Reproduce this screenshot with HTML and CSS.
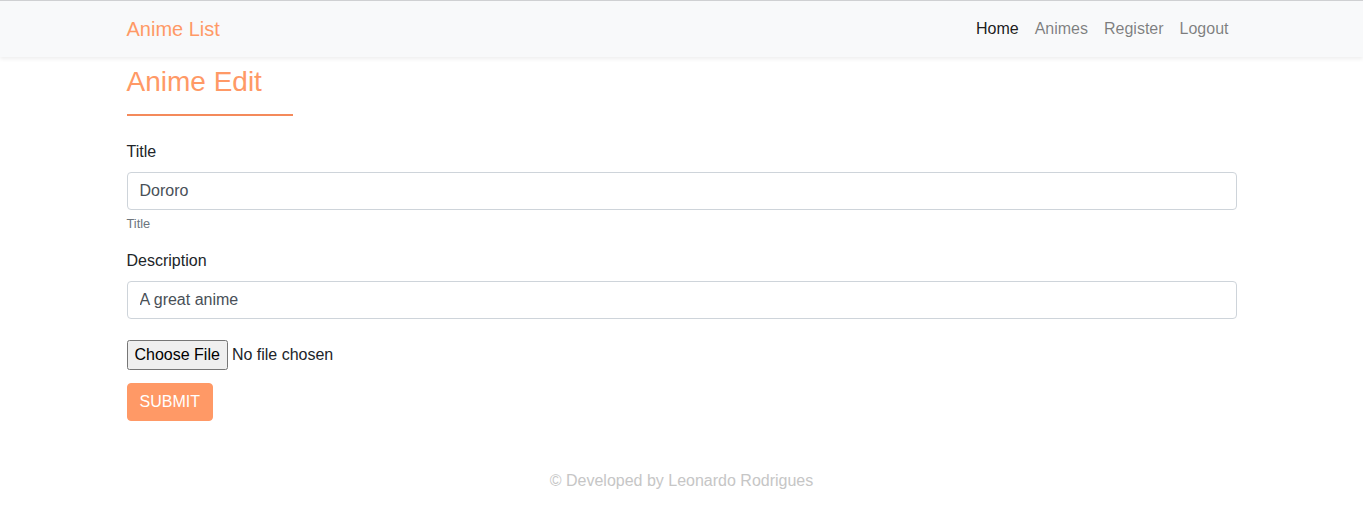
FILE: index.html
```html
<!DOCTYPE html>
<html lang="en">
<head>
<meta charset="utf-8">
<title>Anime Edit</title>
<link rel="stylesheet" href="styles.css">
</head>
<body>
<nav class="navbar">
  <div class="container nav-inner">
    <a class="brand" href="#">Anime List</a>
    <ul class="nav-links">
      <li><a class="nav-link active" href="#">Home</a></li>
      <li><a class="nav-link" href="#">Animes</a></li>
      <li><a class="nav-link" href="#">Register</a></li>
      <li><a class="nav-link" href="#">Logout</a></li>
    </ul>
  </div>
</nav>
<main class="container main">
  <h3 class="page-title">Anime Edit</h3>
  <hr class="title-rule">
  <form class="form">
    <div class="form-group">
      <label class="label" for="title">Title</label>
      <input class="form-control" id="title" type="text" value="Dororo">
      <small class="form-text">Title</small>
    </div>
    <div class="form-group">
      <label class="label" for="desc">Description</label>
      <input class="form-control" id="desc" type="text" value="A great anime">
    </div>
    <div class="file-group">
      <input class="file-input" type="file">
    </div>
    <button class="btn-submit" type="button">SUBMIT</button>
  </form>
</main>
<footer class="footer">© Developed by Leonardo Rodrigues</footer>
</body>
</html>
```
FILE: styles.css
```css
* { box-sizing: border-box; }
html, body { margin: 0; padding: 0; }
body {
  font-family: "Liberation Sans", Arial, sans-serif;
  font-size: 16px;
  line-height: 1.5;
  color: #212529;
  background: #fff;
  border-top: 1px solid #cfd0d2;
}
.container {
  width: 1140px;
  margin: 0 auto;
  padding: 0 15px;
}
.navbar {
  background: #f8f9fa;
  padding: 8px 0;
  box-shadow: 0 2px 4px rgba(0, 0, 0, 0.07);
  position: relative;
}
.nav-inner {
  display: flex;
  align-items: center;
  justify-content: space-between;
}
.brand {
  color: #ff9966;
  font-size: 20px;
  line-height: 30px;
  padding: 5px 0;
  text-decoration: none;
}
.nav-links {
  display: flex;
  list-style: none;
  margin: 0;
  padding: 0;
}
.nav-link {
  display: block;
  padding: 8px;
  color: rgba(0, 0, 0, 0.5);
  text-decoration: none;
  line-height: 24px;
}
.nav-link.active { color: rgba(0, 0, 0, 0.9); }
.main { padding-top: 8px; }
.page-title {
  margin: 0 0 8px;
  font-size: 28px;
  font-weight: 400;
  line-height: 1.2;
  color: #ff9966;
}
.title-rule {
  width: 15%;
  margin: 15px 0 0;
  border: 0;
  border-top: 2px solid #f48a5b;
}
.form { padding-top: 24px; }
.form-group { margin-bottom: 16px; }
.label {
  display: inline-block;
  margin-bottom: 8px;
}
.form-control {
  display: block;
  width: 100%;
  height: 38px;
  padding: 6px 12px;
  font-family: inherit;
  font-size: 16px;
  line-height: 24px;
  color: #495057;
  background: #fff;
  border: 1px solid #ced4da;
  border-radius: 4px;
  margin: 0;
}
.form-text {
  display: block;
  margin-top: 4px;
  font-size: 12.8px;
  line-height: 1.5;
  color: #6c757d;
}
.file-group { padding-top: 5px; margin-bottom: 13px; }
.file-input {
  display: block;
  font-family: inherit;
  font-size: 16px;
  line-height: 24px;
  margin: 0;
}
.file-input::file-selector-button {
  height: 30px;
  font-family: inherit;
  font-size: 16px;
}
.btn-submit {
  display: inline-block;
  font-family: inherit;
  font-size: 16px;
  line-height: 24px;
  padding: 6px 12px;
  color: #fff;
  background: #ff9966;
  border: 1px solid #ff9966;
  border-radius: 4px;
  margin: 0;
}
.footer {
  text-align: center;
  color: #c6c6c6;
  margin-top: 48px;
  line-height: 24px;
}
```
